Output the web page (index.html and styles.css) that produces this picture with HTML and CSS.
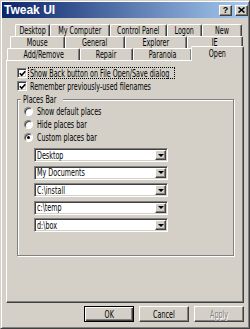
FILE: index.html
```html
<!DOCTYPE html>
<html lang="en">
<head>
  <meta charset="UTF-8">
  <title>Tweak UI</title>
  <link rel="stylesheet" href="styles.css">
</head>
<body>
  <div class="window">
    <div class="titlebar">
      <span class="title">Tweak UI</span>
      <span class="tbtn help">?</span>
      <span class="tbtn close">
        <svg width="7" height="6" viewBox="0 0 7 6"><path d="M0.5 0.5 L6.5 5.5 M6.5 0.5 L0.5 5.5" stroke="#000" stroke-width="1.6"/></svg>
      </span>
    </div>

    <div class="tabs">
      <div class="tab-row row1">
        <div class="tab"><span class="t">Desktop</span></div>
        <div class="tab"><span class="t">My Computer</span></div>
        <div class="tab"><span class="t">Control Panel</span></div>
        <div class="tab"><span class="t">Logon</span></div>
        <div class="tab"><span class="t">New</span></div>
      </div>
      <div class="tab-row row2">
        <div class="tab"><span class="t">Mouse</span></div>
        <div class="tab"><span class="t">General</span></div>
        <div class="tab"><span class="t">Explorer</span></div>
        <div class="tab"><span class="t">IE</span></div>
      </div>
      <div class="tab-row row3">
        <div class="tab"><span class="t">Add/Remove</span></div>
        <div class="tab"><span class="t">Repair</span></div>
        <div class="tab"><span class="t">Paranoia</span></div>
        <div class="tab active"><span class="t">Open</span></div>
      </div>
    </div>

    <div class="panel">
      <div class="check">
        <span class="box"><svg width="7" height="7" viewBox="0 0 7 7"><path d="M0.8 3.2 L2.7 5.2 L6.3 1.2" fill="none" stroke="#000" stroke-width="1.6"/></svg></span>
        <span class="focus"><span class="t">Show Back button on File Open/Save dialog</span></span>
      </div>
      <div class="check">
        <span class="box"><svg width="7" height="7" viewBox="0 0 7 7"><path d="M0.8 3.2 L2.7 5.2 L6.3 1.2" fill="none" stroke="#000" stroke-width="1.6"/></svg></span>
        <span class="check-label"><span class="t">Remember previously-used filenames</span></span>
      </div>

      <div class="group">
        <span class="group-label"><span class="t">Places Bar</span></span>
        <div class="radio"><span class="dot"></span><span class="t">Show default places</span></div>
        <div class="radio"><span class="dot"></span><span class="t">Hide places bar</span></div>
        <div class="radio"><span class="dot on"></span><span class="t">Custom places bar</span></div>

        <div class="combos">
          <div class="combo"><span class="combo-text"><span class="t">Desktop</span></span><span class="arrow"></span></div>
          <div class="combo"><span class="combo-text"><span class="t">My Documents</span></span><span class="arrow"></span></div>
          <div class="combo"><span class="combo-text"><span class="t">C:\install</span></span><span class="arrow"></span></div>
          <div class="combo"><span class="combo-text"><span class="t">c:\temp</span></span><span class="arrow"></span></div>
          <div class="combo"><span class="combo-text"><span class="t">d:\box</span></span><span class="arrow"></span></div>
        </div>
      </div>
    </div>

    <div class="buttons">
      <div class="btn default"><span class="t">OK</span></div>
      <div class="btn"><span class="t">Cancel</span></div>
      <div class="btn disabled"><span class="t">Apply</span></div>
    </div>
  </div>
</body>
</html>
```

FILE: styles.css
```css
body {
  margin: 0;
  background: #d4d0c8;
  font-family: "DejaVu Sans", "Liberation Sans", sans-serif;
  font-size: 10px;
  color: #000;
}

/* dialog text is narrow, like the original screenshot */
.t {
  display: inline-block;
  flex-shrink: 0;
  white-space: nowrap;
  line-height: 11px;
  transform: scaleX(.64);
  transform-origin: 0 50%;
}

.window {
  width: 250px;
  height: 329px;
  box-sizing: border-box;
  padding: 1px;
  border: 1px solid;
  border-color: #d4d0c8 #404040 #404040 #d4d0c8;
  box-shadow: inset 1px 1px #fff, inset -1px -1px #808080;
  background: #d4d0c8;
}

.titlebar {
  height: 16px;
  display: flex;
  align-items: center;
  padding-left: 2px;
  background: linear-gradient(to right, #0a246a, #a6caf0);
}

.title {
  flex: 1;
  color: #fff;
  font-family: "Liberation Sans", Arial, sans-serif;
  font-weight: bold;
  font-size: 12px;
}

.tbtn {
  width: 13px;
  height: 11px;
  box-sizing: border-box;
  margin-left: 3px;
  display: flex;
  justify-content: center;
  align-items: center;
  background: #d4d0c8;
  border: 1px solid;
  border-color: #fff #404040 #404040 #fff;
  box-shadow: inset -1px -1px #808080;
}

.help {
  font-family: "Liberation Sans", Arial, sans-serif;
  font-weight: bold;
  font-size: 9px;
  line-height: 9px;
}

/* tabs */
.tabs {
  margin-top: 6px;
}

.tab-row {
  display: grid;
  height: 12px;
}

.row1 {
  margin-left: 13px;
  grid-template-columns: 35px 60px 57px 35px 40px;
}

.row2 {
  margin-left: 8px;
  grid-template-columns: 55px 60px 62px 56px;
}

.row3 {
  margin-left: 5px;
  grid-template-columns: 73px 53px 59px 51px;
}

.tab {
  height: 12px;
  box-sizing: border-box;
  display: flex;
  justify-content: center;
  align-items: center;
  background: #d4d0c8;
  border: 1px solid;
  border-bottom: 0;
  border-color: #fff #404040 #fff #fff;
  box-shadow: inset -1px 0 #808080;
  border-radius: 2px 2px 0 0;
}

.tab .t,
.btn .t {
  transform-origin: 50% 50%;
}

.tab.active {
  position: relative;
  z-index: 1;
  height: 15px;
  margin: -2px -1px -1px -1px;
  padding-bottom: 2px;
}

/* page */
.panel {
  margin-left: 4px;
  width: 238px;
  height: 243px;
  box-sizing: border-box;
  padding: 6px 0 0 10px;
  border: 1px solid;
  border-color: #fff #404040 #404040 #fff;
  box-shadow: inset -1px -1px #808080;
}

.check {
  display: flex;
  align-items: center;
  height: 12px;
}

.check + .check {
  margin-top: 1px;
}

.box {
  width: 10px;
  height: 10px;
  box-sizing: border-box;
  display: flex;
  justify-content: center;
  align-items: center;
  background: #fff;
  border: 1px solid;
  border-color: #808080 #fff #fff #808080;
  box-shadow: inset 1px 1px #404040, inset -1px -1px #d4d0c8;
}

.focus {
  margin-left: 1px;
  width: 147px;
  height: 12px;
  box-sizing: border-box;
  display: flex;
  align-items: center;
  padding-left: 1px;
  border: 1px dotted #000;
}

.check-label {
  margin-left: 3px;
}

.group {
  position: relative;
  margin-top: 7px;
  width: 217px;
  height: 157px;
  box-sizing: border-box;
  padding: 5px 0 0 6px;
  border: 1px solid #808080;
  box-shadow: inset 1px 1px #fff, 1px 1px #fff;
}

.group-label {
  position: absolute;
  top: -6px;
  left: 3px;
  width: 38px;
  padding: 0 2px;
  display: flex;
  background: #d4d0c8;
}

.radio {
  display: flex;
  align-items: center;
  height: 13px;
}

.dot {
  position: relative;
  width: 9px;
  height: 9px;
  box-sizing: border-box;
  margin-right: 4px;
  border-radius: 50%;
  background: #fff;
  border: 1px solid;
  border-color: #808080 #fff #fff #808080;
  box-shadow: inset 1px 1px #404040;
}

.dot.on::after {
  content: "";
  position: absolute;
  left: 2px;
  top: 2px;
  width: 3px;
  height: 3px;
  border-radius: 50%;
  background: #000;
}

.combos {
  margin-top: 4px;
  display: flex;
  flex-direction: column;
  gap: 3.5px;
}

.combo {
  margin-left: 10px;
  width: 134px;
  height: 14px;
  box-sizing: border-box;
  display: flex;
  align-items: center;
  padding: 1px 1px 1px 2px;
  background: #fff;
  border: 1px solid;
  border-color: #808080 #fff #fff #808080;
  box-shadow: inset 1px 1px #404040, inset -1px -1px #d4d0c8;
}

.combo-text {
  flex: 1;
  display: flex;
  overflow: hidden;
}

.arrow {
  width: 11px;
  height: 10px;
  box-sizing: border-box;
  display: flex;
  justify-content: center;
  align-items: center;
  background: #d4d0c8;
  border: 1px solid;
  border-color: #fff #404040 #404040 #fff;
  box-shadow: inset -1px -1px #808080;
}

.arrow::before {
  content: "";
  border-top: 3px solid #000;
  border-left: 3px solid transparent;
  border-right: 3px solid transparent;
}

/* dialog buttons */
.buttons {
  display: flex;
  justify-content: flex-end;
  gap: 5px;
  margin: 3px 4px 0 0;
}

.btn {
  width: 50px;
  height: 16px;
  box-sizing: border-box;
  display: flex;
  justify-content: center;
  align-items: center;
  border: 1px solid;
  border-color: #fff #404040 #404040 #fff;
  box-shadow: inset -1px -1px #808080;
}

.btn.default {
  border-color: #000;
  box-shadow: inset 1px 1px #fff, inset -1px -1px #404040, inset -2px -2px #808080;
}

.btn.disabled {
  color: #808080;
  text-shadow: 1px 1px #fff;
}
```
